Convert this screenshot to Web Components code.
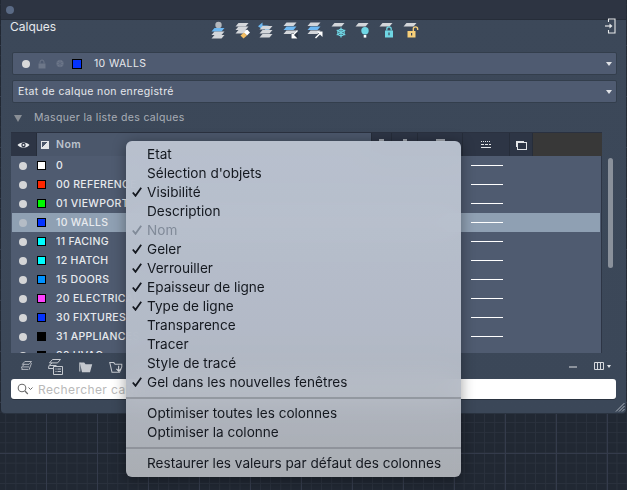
<!DOCTYPE html>
<html lang="fr">
<head>
<meta charset="utf-8">
<title>Calques</title>
<style>
  html, body { margin: 0; height: 490px; overflow: hidden; }
  body {
    position: relative;
    padding-left: 1px;
    box-sizing: border-box;
    font-family: "Inter", "Liberation Sans", sans-serif;
    background-color: #212833;
    background-image:
      linear-gradient(#343b4b 1px, transparent 1px),
      linear-gradient(90deg, #343b4b 1px, transparent 1px),
      linear-gradient(#2a313d 1px, transparent 1px),
      linear-gradient(90deg, #2a313d 1px, transparent 1px);
    background-size: 51px 51px, 51px 51px, 10.2px 10.2px, 10.2px 10.2px;
    background-position: 0 45px, 46px 0, 0 45px, 46px 0;
  }
</style>
</head>
<body>
<layer-panel>
  <panel-select slot="selects" current>10 WALLS</panel-select>
  <panel-select slot="selects">Etat de calque non enregistré</panel-select>
  <layer-table slot="table">
    <layer-row color="#ffffff">0</layer-row>
    <layer-row color="#ff2600">00 REFERENCE</layer-row>
    <layer-row color="#00f900">01 VIEWPORT</layer-row>
    <layer-row color="#0433ff" selected>10 WALLS</layer-row>
    <layer-row color="#00fdff">11 FACING</layer-row>
    <layer-row color="#00fdff">12 HATCH</layer-row>
    <layer-row color="#0091ff">15 DOORS</layer-row>
    <layer-row color="#ff40ff">20 ELECTRICAL</layer-row>
    <layer-row color="#0433ff">30 FIXTURES</layer-row>
    <layer-row color="#000000">31 APPLIANCES</layer-row>
    <layer-row color="#000000">32 HVAC</layer-row>
  </layer-table>
  <search-box slot="search"></search-box>
</layer-panel>
<context-menu>
  <menu-entry>Etat</menu-entry>
  <menu-entry>Sélection d'objets</menu-entry>
  <menu-entry checked>Visibilité</menu-entry>
  <menu-entry>Description</menu-entry>
  <menu-entry checked disabled>Nom</menu-entry>
  <menu-entry checked>Geler</menu-entry>
  <menu-entry checked>Verrouiller</menu-entry>
  <menu-entry checked>Epaisseur de ligne</menu-entry>
  <menu-entry checked>Type de ligne</menu-entry>
  <menu-entry>Transparence</menu-entry>
  <menu-entry>Tracer</menu-entry>
  <menu-entry>Style de tracé</menu-entry>
  <menu-entry checked>Gel dans les nouvelles fenêtres</menu-entry>
  <menu-divider></menu-divider>
  <menu-entry>Optimiser toutes les colonnes</menu-entry>
  <menu-entry>Optimiser la colonne</menu-entry>
  <menu-divider></menu-divider>
  <menu-entry>Restaurer les valeurs par défaut des colonnes</menu-entry>
</context-menu>

<script>
const PANEL_FONT = `font-family: "Inter", "Liberation Sans", sans-serif; font-size: 10.5px; letter-spacing: .35px;`;

// one layer sheet of the small toolbar stacks
function sheet(y, color) {
  return `<path d="M5.5 ${y}h10l-3 3.4h-10z" fill="${color}"/>`;
}
const GREY = '#d3d6da', BLUE = '#6db8f2', CYAN = '#6fd6e4';

const ICONS = {
  current: `<circle cx="9.5" cy="4" r="3.2" fill="#b4b8bd"/>${sheet(7, BLUE)}${sheet(10.5, GREY)}${sheet(14, GREY)}`,
  match: `${sheet(2, GREY)}${sheet(5.5, GREY)}${sheet(9, GREY)}<path d="M11 11.5l3-3 3 3-3 3z" fill="#fff"/><path d="M7.5 14.5l3.5-3 3 3-3.5 3z" fill="#f2bd62"/>`,
  previous: `<path d="M3 5.2h7c3 0 3 3.3 0 3.3H8" fill="none" stroke="${BLUE}" stroke-width="1.6"/><path d="M5.5 1.5v7L1 5.2z" fill="${BLUE}"/>${sheet(5, GREY)}${sheet(9, GREY)}${sheet(13, GREY)}`,
  moveDown: `${sheet(1.5, GREY)}${sheet(5.5, BLUE)}${sheet(9.5, GREY)}<path d="M10 12h7v6h-7z" fill="#2f3948"/><path d="M16.5 9.5L12 14" stroke="#fff" stroke-width="1.4"/><path d="M10.5 11.5v6h6z" fill="#fff"/>`,
  moveUp: `${sheet(1.5, GREY)}${sheet(5.5, BLUE)}${sheet(9.5, GREY)}<path d="M10.5 17l5-5" stroke="#fff" stroke-width="1.4"/><path d="M12 10.5h5.5V16z" fill="#fff"/>`,
  freeze: `${sheet(2, GREY)}<g stroke="${CYAN}" stroke-width="1.2" fill="none"><circle cx="12" cy="11.5" r="3.2"/><path d="M12 6.5v10M7.7 9l8.6 5M7.7 14l8.6-5"/></g>`,
  bulb: `${sheet(2, GREY)}<circle cx="12" cy="9.8" r="3.7" fill="${CYAN}"/><path d="M10.7 14h2.6v2.6h-2.6z" fill="#fff"/>`,
  lock: `${sheet(2, GREY)}<path d="M9.8 9.5V8a2.2 2.2 0 0 1 4.4 0v1.5" fill="none" stroke="${CYAN}" stroke-width="1.3"/><path d="M8 9.5h8v7H8z" fill="${CYAN}"/><path d="M11.4 11.6h1.2v2.6h-1.2z" fill="#3b4758"/>`,
  unlock: `${sheet(2, GREY)}<path d="M12.3 10V8a2.2 2.2 0 0 1 4.4 0v1" fill="none" stroke="#f7cf79" stroke-width="1.3"/><path d="M6.5 10h8v6.5h-8z" fill="#f7cf79"/><path d="M10 12h1.2v2.4H10z" fill="#3b4758"/>`,
  exit: `<path d="M9 1H16v14H9M9.500 1v3M9.500 12v3" fill="none" stroke="#e6e8ea" stroke-width="1.100"/><path d="M6 8h5" stroke="#e6e8ea" stroke-width="1.200"/><path d="M10.500 5.500L13.500 8l-3 2.500z" fill="#e6e8ea"/>`,
  newLayer: `<g fill="none" stroke="#c5c9cf" stroke-width="1"><path d="M7 3h8l-3 3.4H4zM4 9.5h8M3 12.5h8M6.5 6.5L3 9.5l1 3"/><path d="M15 5l-3 8"/></g>`,
  newState: `<g fill="none" stroke="#c5c9cf" stroke-width="1"><path d="M6.500 1.500h8l-3 3.400h-8zM3.500 7.500h7M2.500 10.500h6M6 5L3 7.500l-.5 3"/><path d="M7.500 8.500h9v8h-9z" fill="#3b4758"/><path d="M9.500 11h1M11.500 11h3.500M9.500 13.500h1M11.500 13.500h3.500"/></g>`,
  folder: `<path d="M2 4h5l1.500 2h7.500l-2.500 9H4.500z" fill="#c5c9cf"/><path d="M2 4v10" stroke="#c5c9cf" stroke-width="1.200"/>`,
  folderPlus: `<path d="M2 4h4.500L8 6h7.500v3l-2.500 6H4.500z" fill="none" stroke="#c5c9cf" stroke-width="1.200"/><path d="M12 7.500v6M9.500 11l2.500 2.700 2.500-2.700" fill="none" stroke="#dfe2e5" stroke-width="1.200"/>`,
  columns: `<g fill="none" stroke="#d6d9dd" stroke-width="1"><path d="M1.500 1.500h9v7h-9zM4.500 1.500v7M7.500 1.500v7"/></g>`,
  grip: `<path d="M1 9.500L9.500 1M4 9.500L9.500 4M7 9.500L9.500 7" stroke="#a9b0b9" stroke-width="1" fill="none"/>`
};

function svgIcon(name, size = 18, box = 18) {
  return `<svg width="${size}" height="${size}" viewBox="0 0 ${box} ${box}" aria-hidden="true">${ICONS[name]}</svg>`;
}

class PanelSelect extends HTMLElement {
  connectedCallback() {
    const current = this.hasAttribute('current');
    const shadow = this.attachShadow({ mode: 'open' });
    shadow.innerHTML = `
      <style>
        :host {
          display: flex; align-items: center;
          height: 23px; box-sizing: border-box;
          margin-left: 1px;
          padding: 0 4px 0 5px;
          background: #4f5b71;
          border: 1px solid #333e4c;
          border-radius: 2px;
          color: #e6e8ec;
          ${PANEL_FONT}
        }
        .state { display: flex; align-items: center; width: 72px; flex: none; margin-left: 4px; }
        .dot { width: 8px; height: 8px; border-radius: 50%; background: #d9d9d9; }
        .state svg { flex: none; }
        .lock { margin-left: 8px; }
        .frz { margin-left: 10px; }
        .swatch { margin-left: 8px; width: 8px; height: 8px; background: #0433ff; border: 1px solid #000; }
        .text { flex: 1; }
        .arrow { width: 0; height: 0; border: 3px solid transparent; border-top: 4px solid #dfe2e6; border-bottom: 0; }
      </style>
      ${current ? `<span class="state"><span class="dot"></span>
        <svg class="lock" width="8" height="10" viewBox="0 0 8 10"><path d="M2 4.500V3a2 2 0 0 1 4 0v1.500" fill="none" stroke="#6d7789"/><path d="M.5 4.500h7v5h-7z" fill="#6d7789"/></svg>
        <svg class="frz" width="8" height="9" viewBox="0 0 8 9"><circle cx="4" cy="4.500" r="3.500" fill="#6d7789"/><path d="M4 0v9M.5 2.500l7 4M.5 6.500l7-4" stroke="#58637a" stroke-width=".7"/></svg>
        <span class="swatch"></span></span>` : ''}
      <span class="text"><slot></slot></span>
      <span class="arrow"></span>`;
  }
}
customElements.define('panel-select', PanelSelect);

class LayerRow extends HTMLElement {
  connectedCallback() {
    const color = this.getAttribute('color');
    const shadow = this.attachShadow({ mode: 'open' });
    shadow.innerHTML = `
      <style>
        :host {
          display: flex; align-items: center; height: 19px; flex: none;
          padding-left: 7px;
          color: #e8eaee;
          font-family: "Inter", "Liberation Sans", sans-serif;
          font-size: 10.5px; letter-spacing: .3px; white-space: nowrap;
        }
        :host([selected]) { background: #8fa0b3; margin-right: 1px; }
        .dot { width: 8px; height: 8px; border-radius: 50%; background: #d4d5d7; }
        :host([selected]) .dot { background: #b4bcc6; }
        .swatch { margin-left: 10px; width: 7px; height: 7px; border: 1px solid #000; background: ${color}; }
        .name { margin-left: 10px; width: 415px; font-weight: 500; }
        .line { width: 32px; height: 1px; background: #fff; }
      </style>
      <span class="dot"></span><span class="swatch"></span>
      <span class="name"><slot></slot></span>
      <span class="line"></span>`;
  }
}
customElements.define('layer-row', LayerRow);

class LayerTable extends HTMLElement {
  constructor() {
    super();
    const shadow = this.attachShadow({ mode: 'open' });
    shadow.innerHTML = `
      <style>
        :host { display: flex; flex-direction: column; width: 591px; height: 221px; overflow: hidden; flex: none; }
        .head { display: flex; height: 24px; flex: none; background: #2d3545; border-top: 1px solid #2a3140; box-sizing: border-box; }
        .cell { display: flex; align-items: center; justify-content: center; box-sizing: border-box; border-right: 1px solid #262d3a; position: relative; }
        .eye { width: 26px; }
        .nom {
          width: 335px; justify-content: flex-start; padding-left: 4px; background: #4b576b;
          color: #bcc3cd; font-family: "Inter", "Liberation Sans", sans-serif; font-size: 10.5px; font-weight: 600; letter-spacing: .45px;
        }
        .nom b { font-weight: 600; margin-left: 7px; }
        .mark { width: 8px; height: 8px; border: 1px solid #e3e5e8; background: linear-gradient(135deg, transparent 50%, #e3e5e8 50%); box-sizing: border-box; }
        .c1 { width: 20px; } .c2 { width: 26px; } .c3 { width: 45px; } .c4 { width: 47px; } .c5 { width: 23px; }
        .rest { flex: 1; background: #383838; }
        .peek { position: absolute; top: 6px; height: 3px; background: #9ea4ad; }
        .transp { width: 8px; height: 6px; border: 1px solid #e3e5e8; box-shadow: -2px -2px 0 -1px #e3e5e8; margin: 2px 0 0 1px; }
        .body {
          flex: 1; min-height: 0; display: flex; flex-direction: column;
          padding-left: 1px; background: #4f5b70; border-right: 1px solid #2d3545;
        }
      </style>
      <div class="head">
        <div class="cell eye">
          <svg width="13" height="8" viewBox="0 0 13 8"><path d="M.5 4C3 .6 10 .6 12.500 4 10 7.400 3 7.400 .5 4z" fill="#eceef0"/><circle cx="6.500" cy="4" r="2.200" fill="#2d3545"/><circle cx="6.500" cy="4" r="1" fill="#eceef0"/></svg>
        </div>
        <div class="cell nom"><span class="mark"></span><b>Nom</b></div>
        <div class="cell c1"><span class="peek" style="width:5px"></span></div>
        <div class="cell c2"><span class="peek" style="width:4px"></span></div>
        <div class="cell c3"><span class="peek" style="width:9px"></span></div>
        <div class="cell c4">
          <svg width="10" height="7" viewBox="0 0 10 7"><path d="M0 .5h10" stroke="#e3e5e8" stroke-dasharray="1 1"/><path d="M0 3.500h10" stroke="#e3e5e8" stroke-dasharray="3 1"/><path d="M0 6.500h10" stroke="#e3e5e8"/></svg>
        </div>
        <div class="cell c5"><span class="transp"></span></div>
        <div class="rest"></div>
      </div>
      <div class="body"><slot></slot></div>`;
  }
}
customElements.define('layer-table', LayerTable);

class SearchBox extends HTMLElement {
  constructor() {
    super();
    const shadow = this.attachShadow({ mode: 'open' });
    shadow.innerHTML = `
      <style>
        :host {
          display: flex; align-items: center; gap: 4px; height: 20px; flex: none;
          box-sizing: border-box; padding-left: 6px;
          width: 605px;
          background: #fff; border-radius: 3px; box-shadow: 0 1px 0 #2a3340;
          color: #b9b9b9;
          font-family: "Inter", "Liberation Sans", sans-serif; font-size: 12px; letter-spacing: .4px;
        }
        svg { flex: none; }
      </style>
      <svg width="17" height="12" viewBox="0 0 17 12"><circle cx="5" cy="5" r="3.800" fill="none" stroke="#6a6a6a" stroke-width="1.100"/><path d="M8 8l2.800 3" stroke="#6a6a6a" stroke-width="1.200"/><path d="M11.500 4.500L13.500 6.500 15.500 4.500" fill="none" stroke="#6a6a6a"/></svg>
      <span>Rechercher calques</span>`;
  }
}
customElements.define('search-box', SearchBox);

class LayerPanel extends HTMLElement {
  constructor() {
    super();
    const shadow = this.attachShadow({ mode: 'open' });
    const tools = ['current', 'match', 'previous', 'moveDown', 'moveUp', 'freeze', 'bulb', 'lock', 'unlock'];
    shadow.innerHTML = `
      <style>
        :host {
          display: flex; flex-direction: column;
          width: 625px; height: 413px; box-sizing: border-box;
          background: linear-gradient(#3c4859, #3b4758);
          border-radius: 0 0 4px 4px;
          box-shadow: 0 1px 0 #2a3340;
          overflow: hidden;
          color: #e6e8ec;
          ${PANEL_FONT}
        }
        .titlebar {
          display: flex; align-items: center; height: 20px; flex: none; box-sizing: border-box;
          padding-left: 5px; background: #2d3442; border-bottom: 1px solid #262d39;
        }
        .titlebar i { width: 8px; height: 8px; border-radius: 50%; background: #5a6a85; }
        .content { flex: 1; display: flex; flex-direction: column; padding: 0 9px 0 10px; min-height: 0; }
        .top { display: flex; height: 32px; flex: none; }
        h1 { margin: 0 0 0 -1px; width: 199px; font-size: 12px; font-weight: 400; letter-spacing: 0; line-height: 14px; flex: none; }
        .tools { display: flex; gap: 6px; margin-top: 1px; }
        .tools svg { display: block; }
        .exit { margin-left: auto; margin-top: -2px; }
        .selects { display: flex; flex-direction: column; gap: 5px; }
        .toggle { display: flex; align-items: center; height: 29px; flex: none; color: #a9aeb6; }
        .toggle i { width: 0; height: 0; margin: 1px 12px 0 3px; border: 4.500px solid transparent; border-top: 7px solid #8a8f96; border-bottom: 0; }
        .list { display: flex; height: 221px; flex: none; }
        .scroll { width: 5px; height: 110px; margin: 26px 0 0 6px; background: #8a919b; border-radius: 3px; flex: none; }
        .foot { display: flex; align-items: center; height: 25px; flex: none; padding: 1px 0 0 8px; }
        .foot .l { display: flex; align-items: center; }
        .foot .minus { margin-left: auto; width: 8px; height: 2px; background: #8c939d; }
        .foot .cols { margin-left: 16px; display: flex; align-items: center; gap: 2px; margin-right: 6px; }
        .foot .cols i { width: 0; height: 0; border: 2.500px solid transparent; border-top: 3px solid #dfe2e6; border-bottom: 0; }
        .grip { display: flex; justify-content: flex-end; margin: auto -8px 1px 0; height: 10px; }
      </style>
      <div class="titlebar"><i></i></div>
      <div class="content">
        <div class="top">
          <h1>Calques</h1>
          <div class="tools">${tools.map(t => svgIcon(t)).join('')}</div>
          <div class="exit">${svgIcon('exit', 18, 18)}</div>
        </div>
        <div class="selects"><slot name="selects"></slot></div>
        <div class="toggle"><i></i><span>Masquer la liste des calques</span></div>
        <div class="list"><slot name="table"></slot><div class="scroll"></div></div>
        <div class="foot">
          <div class="l">
            ${svgIcon('newLayer', 15, 18)}
            <span style="width:12px"></span>${svgIcon('newState', 18, 18)}
            <span style="width:14px"></span>${svgIcon('folder', 16, 18)}
            <span style="width:14px"></span>${svgIcon('folderPlus', 16, 18)}
          </div>
          <span class="minus"></span>
          <span class="cols">${svgIcon('columns', 12, 12)}<i></i></span>
        </div>
        <slot name="search"></slot>
        <div class="grip">${svgIcon('grip', 10, 10)}</div>
      </div>`;
  }
}
customElements.define('layer-panel', LayerPanel);

class ContextMenu extends HTMLElement {
  constructor() {
    super();
    const shadow = this.attachShadow({ mode: 'open' });
    shadow.innerHTML = `
      <style>
        :host {
          position: absolute; left: 126px; top: 141px; width: 335px;
          box-sizing: border-box; padding: 3px 0 5px;
          display: flex; flex-direction: column;
          border-radius: 6px;
          background: linear-gradient(rgba(190,198,211,.95), rgba(184,191,203,.95) 60%, rgba(178,181,187,.95));
          -webkit-backdrop-filter: blur(14px); backdrop-filter: blur(14px);
          box-shadow: 0 2px 14px rgba(0,0,0,.38);
        }
      </style>
      <slot></slot>`;
  }
}
customElements.define('context-menu', ContextMenu);

class MenuEntry extends HTMLElement {
  connectedCallback() {
    const shadow = this.attachShadow({ mode: 'open' });
    const check = this.hasAttribute('checked')
      ? `<svg width="10" height="10" viewBox="0 0 10 10"><path d="M.8 5.500L3.500 8.800 9.200 .7" fill="none" stroke="currentColor" stroke-width="1.800"/></svg>`
      : '';
    shadow.innerHTML = `
      <style>
        :host {
          display: flex; align-items: center; height: 19px; flex: none;
          color: #14181f;
          font-family: "Inter", "Liberation Sans", sans-serif;
          font-size: 13.6px; white-space: nowrap;
        }
        :host([disabled]) { color: #808a98; }
        .mark { width: 21px; padding-left: 6px; box-sizing: border-box; display: flex; }
      </style>
      <span class="mark">${check}</span><slot></slot>`;
  }
}
customElements.define('menu-entry', MenuEntry);

class MenuDivider extends HTMLElement {
  constructor() {
    super();
    const shadow = this.attachShadow({ mode: 'open' });
    shadow.innerHTML = `
      <style>
        :host { display: block; height: 12px; flex: none; position: relative; }
        div { height: 2px; top: 6px; background: rgba(120,124,132,.55); position: absolute; left: 0; right: 0; }
      </style>
      <div></div>`;
  }
}
customElements.define('menu-divider', MenuDivider);
</script>
</body>
</html>
